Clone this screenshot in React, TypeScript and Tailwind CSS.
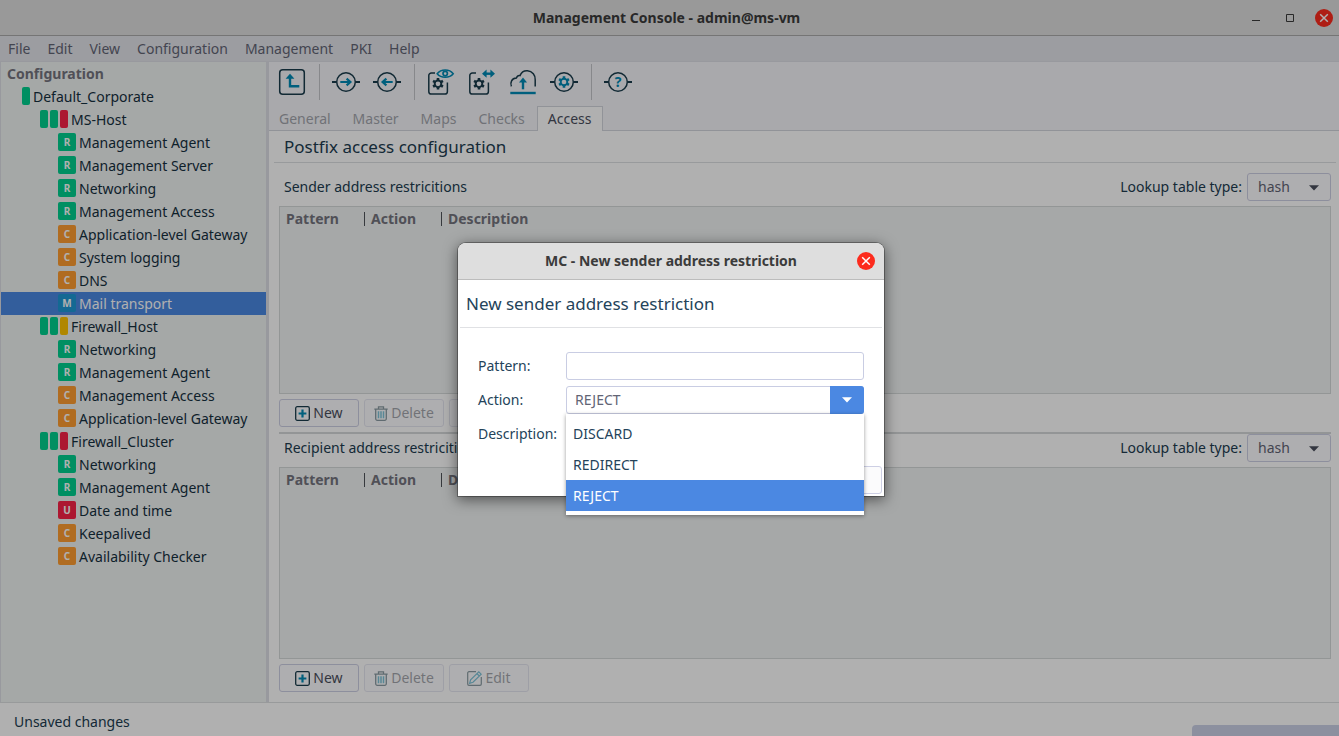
import React from "react";

type Badge = "R" | "C" | "M" | "U";
type Bar = "green" | "red" | "yellow";
type Node = { label: string; badge?: Badge; bars?: Bar[]; root?: boolean };

const tree: Node[] = [
  { label: "Default_Corporate", bars: ["green"], root: true },
  { label: "MS-Host", bars: ["green", "green", "red"] },
  { label: "Management Agent", badge: "R" },
  { label: "Management Server", badge: "R" },
  { label: "Networking", badge: "R" },
  { label: "Management Access", badge: "R" },
  { label: "Application-level Gateway", badge: "C" },
  { label: "System logging", badge: "C" },
  { label: "DNS", badge: "C" },
  { label: "Mail transport", badge: "M" },
  { label: "Firewall_Host", bars: ["green", "green", "yellow"] },
  { label: "Networking", badge: "R" },
  { label: "Management Agent", badge: "R" },
  { label: "Management Access", badge: "C" },
  { label: "Application-level Gateway", badge: "C" },
  { label: "Firewall_Cluster", bars: ["green", "green", "red"] },
  { label: "Networking", badge: "R" },
  { label: "Management Agent", badge: "R" },
  { label: "Date and time", badge: "U" },
  { label: "Keepalived", badge: "C" },
  { label: "Availability Checker", badge: "C" },
];

const badgeColor: Record<Badge, string> = {
  R: "bg-[#00cf8e]",
  C: "bg-[#ff9d30]",
  M: "bg-[#1d99d6]",
  U: "bg-[#fa2247]",
};
const barColor: Record<Bar, string> = {
  green: "bg-[#00cf8e]",
  red: "bg-[#fa2247]",
  yellow: "bg-[#ffc400]",
};

const DARK = "#1a3c4c";
const TEAL = "#008ab5";

function Gear({ cx, cy, color }: { cx: number; cy: number; color: string }) {
  const teeth = [0, 1, 2, 3, 4, 5].map((i) => {
    const a = Math.PI / 2 + (i * Math.PI) / 3;
    const c = Math.cos(a);
    const s = Math.sin(a);
    return `M${(cx + 3.4 * c).toFixed(2)} ${(cy + 3.4 * s).toFixed(2)}L${(cx + 5.7 * c).toFixed(2)} ${(cy + 5.7 * s).toFixed(2)}`;
  });
  return (
    <>
      <circle cx={cx} cy={cy} r="3.3" fill="none" stroke={color} strokeWidth="1.9" />
      <path d={teeth.join("")} stroke={color} strokeWidth="2.6" />
    </>
  );
}

function Ring() {
  return (
    <>
      <circle cx="14" cy="14" r="9.3" fill="none" stroke={DARK} strokeWidth="1.5" />
      <path d="M0 14H4.5M23.5 14H28" stroke={DARK} strokeWidth="2.2" />
    </>
  );
}

const GEAR_BOX = "M8 4.9H4.4A2.6 2.6 0 0 0 1.8 7.5V23.5A2.6 2.6 0 0 0 4.4 26.1H17.8A2.6 2.6 0 0 0 20.4 23.5V14.5";

const icons = {
  up: (
    <>
      <rect x="1.7" y="1.7" width="24.6" height="24.6" rx="3" fill="none" stroke={DARK} strokeWidth="1.5" />
      <path d="M12 9V18.2H21.3" fill="none" stroke={TEAL} strokeWidth="2.4" />
      <path d="M12 5.8L16.4 10.8H7.6Z" fill={TEAL} />
    </>
  ),
  next: (
    <>
      <Ring />
      <path d="M8.3 14H17M14.6 10.6L18.4 14L14.6 17.4" fill="none" stroke={TEAL} strokeWidth="2.2" />
    </>
  ),
  prev: (
    <>
      <Ring />
      <path d="M19.7 14H11M13.4 10.6L9.6 14L13.4 17.4" fill="none" stroke={TEAL} strokeWidth="2.2" />
    </>
  ),
  view: (
    <>
      <path d={GEAR_BOX} fill="none" stroke={DARK} strokeWidth="1.5" />
      <Gear cx={11} cy={15.8} color={DARK} />
      <path d="M10.2 5.7C14 0.8 22.4 0.8 26.2 5.7C22.4 10.4 14 10.4 10.2 5.7Z" fill="none" stroke={TEAL} strokeWidth="1.6" />
      <circle cx="18.2" cy="5.6" r="2.2" fill="none" stroke={TEAL} strokeWidth="1.7" />
    </>
  ),
  compare: (
    <>
      <path d={GEAR_BOX} fill="none" stroke={DARK} strokeWidth="1.5" />
      <Gear cx={11} cy={15.8} color={DARK} />
      <path d="M16.5 5.7H24.5" stroke={TEAL} strokeWidth="2.4" />
      <path d="M14 5.7L18.6 1.6V9.8ZM27 5.7L22.4 1.6V9.8Z" fill={TEAL} />
    </>
  ),
  upload: (
    <>
      <path
        d="M2.4 18.4C0.8 14.4 2.8 10.2 7.4 10C8.2 7.6 9.6 7.4 11 7.6C12.4 4.2 15 2.6 18.4 2.8C23.4 3.1 26.6 7.2 26.2 11.8V18.4"
        fill="none"
        stroke={DARK}
        strokeWidth="1.5"
      />
      <path d="M14 21.3V13" stroke={TEAL} strokeWidth="2.4" />
      <path d="M14 9.6L18 14.4H10Z" fill={TEAL} />
      <path d="M1.3 25H26.7" stroke={TEAL} strokeWidth="2.4" />
    </>
  ),
  settings: (
    <>
      <Ring />
      <Gear cx={14} cy={14} color={TEAL} />
    </>
  ),
  help: (
    <>
      <Ring />
      <text x="14" y="19" textAnchor="middle" fontSize="14" fontWeight="700" fill={TEAL}>
        ?
      </text>
    </>
  ),
};

function Tool({ name, label }: { name: keyof typeof icons; label: string }) {
  return (
    <button type="button" aria-label={label} className="flex h-10 w-10 items-center justify-center">
      <svg width="28" height="28" viewBox="0 0 28 28" aria-hidden="true">
        {icons[name]}
      </svg>
    </button>
  );
}

function Separator() {
  return <span className="mr-[5px] ml-1.5 h-9 w-px bg-[#c4c5ca]" />;
}

function CloseButton({ label }: { label: string }) {
  return (
    <button type="button" aria-label={label} className="flex size-[18px] items-center justify-center rounded-full bg-[#fc2b1d]">
      <svg width="10" height="10" viewBox="0 0 10 10" aria-hidden="true">
        <path d="M1.2 1.2L8.8 8.8M8.8 1.2L1.2 8.8" stroke="#fff" strokeWidth="1.5" />
      </svg>
    </button>
  );
}

const plusIcon = (
  <svg width="15" height="15" viewBox="0 0 15 15" aria-hidden="true">
    <rect x="0.7" y="0.7" width="13.6" height="13.6" rx="1.5" fill="none" stroke={DARK} strokeWidth="1.3" />
    <path d="M7.5 3.6V11.4M3.6 7.5H11.4" stroke={TEAL} strokeWidth="2.2" />
  </svg>
);
const trashIcon = (
  <svg width="14" height="15" viewBox="0 0 14 15" aria-hidden="true">
    <path d="M0.3 3.2H13.7M4.5 3V0.8H9.5V3M1.7 3.4V12.8A1.5 1.5 0 0 0 3.2 14.3H10.8A1.5 1.5 0 0 0 12.3 12.8V3.4" fill="none" stroke={DARK} strokeWidth="1.3" />
    <path d="M4.5 5.2V12.2M7 5.2V12.2M9.5 5.2V12.2" stroke={TEAL} strokeWidth="1.5" />
  </svg>
);
const editIcon = (
  <svg width="15" height="15" viewBox="0 0 15 15" aria-hidden="true">
    <path d="M9 0.7H2A1.3 1.3 0 0 0 0.7 2V13A1.3 1.3 0 0 0 2 14.3H13A1.3 1.3 0 0 0 14.3 13V6" fill="none" stroke={DARK} strokeWidth="1.2" />
    <path d="M2.6 12.4L3.6 8.8L11.8 0.9L14.2 3.2L6 11.3ZM10 2.7L12.4 5" fill="none" stroke={TEAL} strokeWidth="1.2" />
  </svg>
);

function ActionButton({ icon, label, disabled }: { icon: React.ReactNode; label: string; disabled?: boolean }) {
  return (
    <button
      type="button"
      disabled={disabled}
      className="flex h-7 w-20 items-center justify-center gap-[3px] rounded-[3px] border border-[#cdcfe4] bg-[#fdfdff] text-[#4b4f5e] disabled:opacity-50"
    >
      {icon}
      {label}
    </button>
  );
}

function Restrictions({ id, title, grow }: { id: string; title: string; grow: string }) {
  return (
    <section className={`flex flex-col ${grow}`}>
      <div className="flex h-7 items-center justify-between pl-[5px]">
        <h2 className="text-[#213c50]">{title}</h2>
        <div className="flex items-center gap-[5px]">
          <label htmlFor={id} className="text-[#213c50]">
            Lookup table type:
          </label>
          <span className="relative flex">
            <select id={id} defaultValue="hash" className="h-7 w-[84px] appearance-none rounded-[3px] border border-[#cdcfe4] bg-[#fdfdff] pl-2.5 text-[#626475]">
              <option>hash</option>
            </select>
            <svg className="pointer-events-none absolute top-3 right-3" width="10" height="6" viewBox="0 0 10 6" aria-hidden="true">
              <path d="M0 0.3H10L5 5.6Z" fill="#4b4f5e" />
            </svg>
          </span>
        </div>
      </div>
      <div className="mt-[5px] min-h-24 flex-1 border border-[#d6dad9] bg-[#f1f4f3]">
        <table className="w-full table-fixed text-left text-[#75757f]">
          <thead>
            <tr className="h-6">
              <th className="w-[85px] p-0">
                <div className="flex items-center justify-between pl-1.5">
                  Pattern<span className="h-3.5 w-px bg-[#50555a]" />
                </div>
              </th>
              <th className="w-[77px] p-0">
                <div className="flex items-center justify-between pl-1.5">
                  Action<span className="h-3.5 w-px bg-[#50555a]" />
                </div>
              </th>
              <th className="p-0 pl-1.5">Description</th>
            </tr>
          </thead>
        </table>
      </div>
      <div className="mt-[5px] flex gap-[5px]">
        <ActionButton icon={plusIcon} label="New" />
        <ActionButton icon={trashIcon} label="Delete" disabled />
        <ActionButton icon={editIcon} label="Edit" disabled />
      </div>
    </section>
  );
}

function Sidebar() {
  return (
    <nav aria-label="Configuration" className="w-[269px] shrink-0 border-r-[3px] border-l border-[#dcdee5] bg-[#f0f3f2]">
      <h2 className="h-[23px] pl-1.5 leading-[23px] font-bold text-[#75757f]">Configuration</h2>
      <ul>
        {tree.map((n, i) => (
          <li
            key={i}
            className={`flex h-[23px] items-center gap-[3px] ${n.root ? "pl-[21px]" : n.bars ? "pl-[39px]" : "pl-[57px]"} ${
              n.badge === "M" ? "bg-[#4b88e2] text-white" : "text-[#15303f]"
            }`}
          >
            {n.bars && (
              <span className="mb-px flex gap-0.5">
                {n.bars.map((b, j) => (
                  <span key={j} className={`h-[18px] w-2 rounded-[2px] ${barColor[b]}`} />
                ))}
              </span>
            )}
            {n.badge && (
              <span
                className={`mb-px flex size-[18px] items-center justify-center rounded-[2px] text-[10px] leading-none font-bold text-white ${badgeColor[n.badge]}`}
              >
                {n.badge}
              </span>
            )}
            {n.label}
          </li>
        ))}
      </ul>
    </nav>
  );
}

function Dialog() {
  return (
    <div
      role="dialog"
      aria-labelledby="dialog-title"
      className="flex h-[253px] w-[426px] flex-col rounded-t-lg bg-white text-[#24435a] shadow-[0_3px_14px_1px_rgba(0,0,0,0.5),0_0_0_1px_rgba(0,0,0,0.3)]"
    >
      <header className="grid h-[37px] shrink-0 grid-cols-[1fr_auto_1fr] items-center rounded-t-lg border-b border-[#bcbcbc] bg-[#dedede] px-[9px]">
        <h1 id="dialog-title" className="col-start-2 font-bold text-[#3b3b3b]">
          MC - New sender address restriction
        </h1>
        <span className="flex justify-end">
          <CloseButton label="Close dialog" />
        </span>
      </header>
      <h2 className="mx-0.5 h-12 shrink-0 border-b border-[#e0e1e4] pl-1.5 text-[17px] leading-[48px]">New sender address restriction</h2>
      <form className="mt-6 grid grid-cols-[88px_298px] items-center gap-y-1.5 pl-5">
        <label htmlFor="pattern">Pattern:</label>
        <input id="pattern" className="h-7 rounded-[3px] border border-[#c9cde3] bg-white px-2" />
        <label htmlFor="action">Action:</label>
        <div className="relative">
          <select
            id="action"
            defaultValue="REJECT"
            className="block h-7 w-full appearance-none rounded-[3px] border border-[#c9cde3] bg-white pl-2 text-[#626475]"
          >
            <option>REJECT</option>
          </select>
          <span className="pointer-events-none absolute inset-y-0 right-0 flex w-[34px] items-center justify-center rounded-r-[3px] bg-[#4b88e2]">
            <svg width="10" height="6" viewBox="0 0 10 6" aria-hidden="true">
              <path d="M0 0.3H10L5 5.6Z" fill="#fff" />
            </svg>
          </span>
          <ul
            role="listbox"
            aria-label="Action"
            className="absolute inset-x-0 top-full z-10 bg-white py-1 text-[#24435a] shadow-[0_1px_4px_rgba(0,0,0,0.4)]"
          >
            <li role="option" aria-selected="false" className="h-[31px] pl-[7px] leading-[31px]">
              DISCARD
            </li>
            <li role="option" aria-selected="false" className="h-[31px] pl-[7px] leading-[31px]">
              REDIRECT
            </li>
            <li role="option" aria-selected="true" className="h-[31px] bg-[#4b88e2] pl-[7px] leading-[31px] text-white">
              REJECT
            </li>
          </ul>
        </div>
        <label htmlFor="description">Description:</label>
        <input id="description" className="h-7 rounded-[3px] border border-[#c9cde3] bg-white px-2" />
      </form>
      <div className="mt-auto flex justify-end pr-0.5 pb-0.5">
        <button type="button" aria-label="Cancel" className="h-7 w-20 rounded-[3px] border border-[#cdcfe4] bg-[#fbfbfc]" />
      </div>
    </div>
  );
}

export default function App() {
  const menus = ["File", "Edit", "View", "Configuration", "Management", "PKI", "Help"];
  const tabs = ["General", "Master", "Maps", "Checks", "Access"];
  return (
    <div className="relative flex h-screen min-h-[560px] flex-col overflow-hidden bg-white font-['Noto_Sans',sans-serif] text-[14px] leading-5">
      <header className="grid h-9 shrink-0 grid-cols-[1fr_auto_1fr] items-center border-b border-[#aaaaaa] bg-[#dedede] pr-1.5">
        <h1 className="col-start-2 font-bold text-[#3b3b3b]">Management Console - admin@ms-vm</h1>
        <div className="flex items-center justify-end gap-4">
          <button type="button" aria-label="Minimize" className="flex size-[18px] items-center justify-center">
            <svg width="8" height="8" viewBox="0 0 8 8" aria-hidden="true">
              <path d="M0 6.5H8" stroke="#3b3b3b" />
            </svg>
          </button>
          <button type="button" aria-label="Maximize" className="flex size-[18px] items-center justify-center">
            <svg width="8" height="8" viewBox="0 0 8 8" aria-hidden="true">
              <path d="M0.5 0.5H7.5V7.5H0.5Z" fill="none" stroke="#3b3b3b" />
            </svg>
          </button>
          <CloseButton label="Close window" />
        </div>
      </header>
      <nav aria-label="Menu" className="flex h-[26px] shrink-0 items-center gap-[17px] border-b border-[#dcdee5] bg-[#e3e4ea] pl-2 text-[#626475]">
        {menus.map((m) => (
          <button key={m} type="button">
            {m}
          </button>
        ))}
      </nav>
      <div className="flex min-h-0 flex-1">
        <Sidebar />
        <main className="flex min-w-0 flex-1 flex-col">
          <div className="shrink-0 border-b border-[#d3d5dc] bg-[#f5f5f9]">
            <div className="flex h-10 items-center gap-px pl-[3px]">
              <Tool name="up" label="Up" />
              <Separator />
              <Tool name="next" label="Next" />
              <Tool name="prev" label="Previous" />
              <Separator />
              <Tool name="view" label="View configuration" />
              <Tool name="compare" label="Compare configuration" />
              <Tool name="upload" label="Upload" />
              <Tool name="settings" label="Control" />
              <Separator />
              <Tool name="help" label="Help" />
            </div>
            <div role="tablist" className="-mb-px flex h-[29px] items-end gap-0.5">
              {tabs.map((t) => (
                <button
                  key={t}
                  type="button"
                  role="tab"
                  aria-selected={t === "Access"}
                  className={
                    t === "Access"
                      ? "h-[25px] border border-b-0 border-[#d3d5dc] bg-white px-2.5 text-[#4b4f5e]"
                      : "h-[25px] px-2.5 text-[#a3a5ad]"
                  }
                >
                  {t}
                </button>
              ))}
            </div>
          </div>
          <h2 className="ml-[5px] mr-[3px] h-8 shrink-0 border-b border-[#dddfe2] pl-2.5 text-[17px] leading-8 text-[#213c50]">
            Postfix access configuration
          </h2>
          <div className="flex min-h-0 flex-1 flex-col pt-2.5 pr-2 pb-2.5 pl-2.5">
            <Restrictions id="sender-type" title="Sender address restricitions" grow="grow-[23]" />
            <hr className="mt-[5px] h-0.5 border-0 bg-[#d6d8da]" />
            <Restrictions id="recipient-type" title="Recipient address restricitions" grow="grow-[24]" />
          </div>
        </main>
      </div>
      <footer className="flex h-[34px] shrink-0 items-end justify-between border-t border-[#dcdfe1] bg-white pl-3.5 text-[#213c50]">
        <span className="pb-1">Unsaved changes</span>
        <span className="h-[11px] w-[147px] rounded-tl bg-[#cbd1e7]" />
      </footer>
      <div className="absolute inset-0 flex items-center justify-center bg-black/31 pt-[3px] pl-[3px]">
        <Dialog />
      </div>
    </div>
  );
}
